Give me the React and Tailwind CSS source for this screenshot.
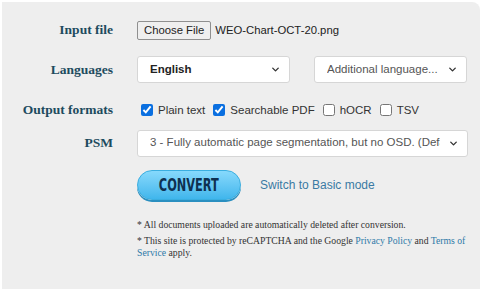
import { ChevronDown } from "lucide-react";

const Label = ({ children }) => (
  <div className="w-[111px] shrink-0 text-right font-['Liberation_Serif',serif] text-[13.5px] font-bold text-[#1d4b5e]">
    {children}
  </div>
);

const Select = ({ children, className }) => (
  <div
    className={`flex h-[27px] items-center justify-between rounded-[3px] border border-[#d6d6d6] bg-white pl-[12px] pr-[8px] text-[11.5px] ${className}`}
  >
    <span className="overflow-hidden whitespace-nowrap">{children}</span>
    <ChevronDown className="ml-2 h-[11px] w-[11px] shrink-0 text-[#333]" strokeWidth={3} />
  </div>
);

const Check = ({ checked, label }) => (
  <label className="flex items-center gap-[5px]">
    <input type="checkbox" defaultChecked={checked} className="h-[12px] w-[12px] accent-[#0a6fe0]" />
    <span>{label}</span>
  </label>
);

const App = () => {
  return (
    <div className="h-[291px] w-[489px] bg-white p-[2px] pr-[9px]">
      <div className="h-full rounded-tr-[8px] bg-[#eeeeee] font-['Liberation_Sans',Arial,sans-serif] text-[#333]">
        {/* input file */}
        <div className="flex items-center gap-[24px] pt-[18px]">
          <Label>Input file</Label>
          <div className="flex items-center gap-[4px] text-[11.3px] text-[#222]">
            <div className="flex h-[19px] items-center rounded-[2px] border border-[#8f8f8f] bg-[#efefef] px-[6px]">
              Choose File
            </div>
            <span>WEO-Chart-OCT-20.png</span>
          </div>
        </div>

        {/* languages */}
        <div className="mt-[16px] flex items-center gap-[24px]">
          <Label>Languages</Label>
          <div className="flex gap-[24px]">
            <Select className="w-[153px] font-bold text-[#222]">English</Select>
            <Select className="w-[153px] text-[#555]">Additional language...</Select>
          </div>
        </div>

        {/* output formats */}
        <div className="mt-[17px] flex items-center gap-[28px]">
          <Label>Output formats</Label>
          <div className="flex items-center gap-[8px] text-[11.5px] text-[#333]">
            <Check checked label="Plain text" />
            <Check checked label="Searchable PDF" />
            <Check label="hOCR" />
            <Check label="TSV" />
          </div>
        </div>

        {/* psm */}
        <div className="mt-[9px] flex items-center gap-[24px]">
          <Label>PSM</Label>
          <Select className="w-[331px] text-[#555]">
            3 - Fully automatic page segmentation, but no OSD. (Default)
          </Select>
        </div>

        {/* convert */}
        <div className="mt-[13px] flex items-center gap-[19px] pl-[135px]">
          <button className="flex h-[30px] w-[104px] items-center justify-center rounded-full border border-[#3aaee0] bg-gradient-to-b from-[#86d9fc] to-[#3fb6ec] text-[#0e3050] shadow-[0_2px_0_#2a8fc0]">
            <span className="inline-block scale-x-[0.7] font-['DejaVu_Sans_Condensed','DejaVu_Sans',sans-serif] text-[18px] font-bold">
              CONVERT
            </span>
          </button>
          <span className="text-[12px] text-[#3a7aa3]">Switch to Basic mode</span>
        </div>

        {/* notes */}
        <div className="mt-[19px] pl-[135px] pr-[10px] font-['Liberation_Serif',serif] text-[9.7px] leading-[12px] text-[#333]">
          <p>* All documents uploaded are automatically deleted after conversion.</p>
          <p className="mt-[4px]">
            * This site is protected by reCAPTCHA and the Google{" "}
            <span className="text-[#2f7aa8]">Privacy Policy</span> and{" "}
            <span className="text-[#2f7aa8]">Terms of Service</span> apply.
          </p>
        </div>
      </div>
    </div>
  );
};

export default App;
